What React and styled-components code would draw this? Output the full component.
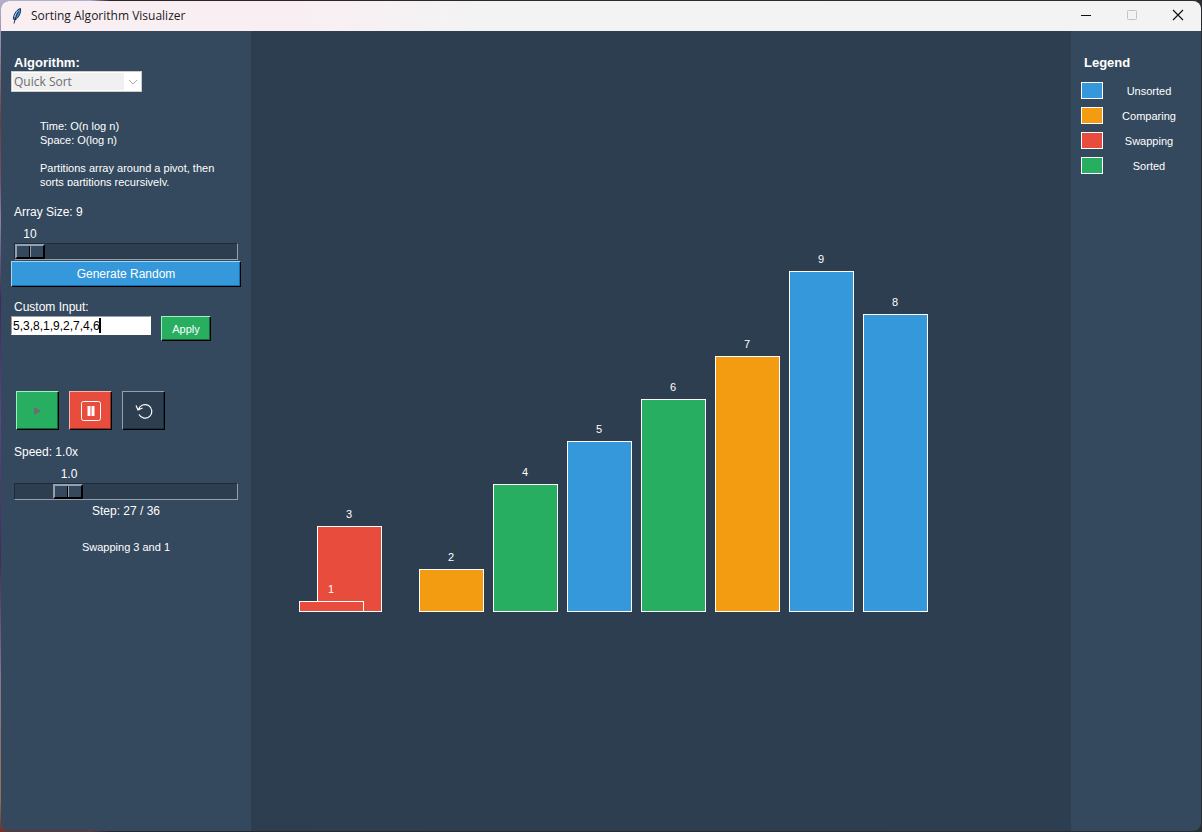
import React, { useState } from "react";
import styled, { createGlobalStyle } from "styled-components";

const GlobalStyle = createGlobalStyle`
  *, *::before, *::after { box-sizing: border-box; }
  html, body, #root { height: 100%; }
  body {
    margin: 0;
    font-family: "Liberation Sans", Arial, sans-serif;
    font-size: 12px;
    line-height: 16px;
    color: #fff;
    background: linear-gradient(180deg, #b3aed0 0, #94849c 50px, #6b3f40 120px, #77506a 180px, #8d83a2 220px, #44275a 300px, #5c4488 420px, #47295c 560px, #8a7890 680px, #97704f 800px, #6f2f2a 100%);
  }
`;

const Frame = styled.div`
  min-height: 100%;
  padding: 1px;
  display: flex;
  background: linear-gradient(90deg, transparent 0, transparent 90px, #2b252d 110px, #2b2d31 100%);
`;

const Window = styled.div`
  flex: 1;
  display: flex;
  flex-direction: column;
  border-radius: 8px;
  overflow: hidden;
  background: #34495e;
`;

const TitleBar = styled.header`
  height: 30px;
  display: flex;
  align-items: center;
  padding: 0 11px 0 10px;
  background: linear-gradient(90deg, #f9eff3 0, #f9eff3 300px, #f3f3f3 480px);
  color: #1b1b1b;
`;

const Title = styled.h1`
  flex: 1;
  margin: 0 0 0 8px;
  font: 400 12px/16px "Open Sans", sans-serif;
`;

const Caption = styled.div`
  display: flex;
  gap: 22px;
`;

const CaptionButton = styled.button`
  width: 24px;
  height: 24px;
  padding: 0;
  border: 0;
  background: none;
  color: ${(p) => (p.disabled ? "#c3c3c3" : "#111")};
  svg { display: block; }
`;

const Body = styled.div`
  flex: 1;
  display: flex;
`;

const Sidebar = styled.aside`
  width: 250px;
  flex: none;
  padding: 24px 10px;
  display: flex;
  flex-direction: column;
`;

const Stage = styled.main`
  flex: 1;
  min-width: 0;
  padding: 0 20px;
  background: #2c3e50;
`;

const Chart = styled.svg`
  display: block;
  overflow: visible;
  text { fill: #fff; font-size: 11px; text-anchor: middle; }
  rect { stroke: #fff; }
`;

const Heading = styled.label`
  padding: 0 3px;
  font-size: 13px;
  font-weight: 700;
`;

const FieldLabel = styled.label`
  padding: 0 3px;
`;

const SelectBox = styled.div`
  position: relative;
  width: 131px;
  height: 21px;
  border: 1px solid #ccc;
  background: #fff;
  padding: 1px;
  svg { position: absolute; right: 3px; top: 5px; pointer-events: none; }
`;

const Select = styled.select`
  display: block;
  width: 111px;
  height: 17px;
  padding: 0 1px;
  border: 0;
  appearance: none;
  background: #f0f0f0;
  color: #6d6d6d;
  opacity: 1;
  font: 12px/17px "Open Sans", sans-serif;
`;

const Info = styled.div`
  height: 67px;
  margin: 27px 0 18px;
  padding: 0 0 0 29px;
  overflow: hidden;
  font-size: 11px;
  line-height: 14px;
  white-space: pre;
`;

const Scale = styled.div`
  display: flex;
  flex-direction: column;
  padding: 0 3px;
  margin-top: 6px;
`;

const ScaleValue = styled.output`
  width: 32px;
  margin-left: ${(p) => p.$at}px;
  text-align: center;
`;

const Range = styled.input`
  appearance: none;
  display: block;
  width: 100%;
  height: 17px;
  margin: 1px 0;
  padding: 0;
  border: 1px solid;
  border-color: #1e2b38 #95a0aa #95a0aa #1e2b38;
  background: #2c3e50;
  &::-webkit-slider-thumb {
    appearance: none;
    width: 30px;
    height: 15px;
    border: 2px solid;
    border-color: #95a0aa #000 #000 #95a0aa;
    background: linear-gradient(90deg, transparent 12px, #000 12px, #000 13px, #95a0aa 13px, #95a0aa 14px, transparent 14px) #34495e;
  }
`;

const Button = styled.button`
  display: flex;
  align-items: center;
  justify-content: center;
  width: ${(p) => p.$w || "auto"};
  height: ${(p) => p.$h};
  padding: 0;
  border: 1px solid;
  border-color: ${(p) => p.$edge} #000 #000 ${(p) => p.$edge};
  box-shadow: inset -1px -1px ${(p) => p.$shade};
  background: ${(p) => p.$fill};
  color: #fff;
  font: ${(p) => p.$size || "12px"}/16px "Liberation Sans", Arial, sans-serif;
`;

const CustomInput = styled.section`
  display: flex;
  flex-direction: column;
  margin-top: 12px;
`;

const InputRow = styled.div`
  display: flex;
  align-items: flex-start;
  gap: 10px;
  padding-top: 1px;
`;

const Entry = styled.div`
  position: relative;
  display: flex;
`;

const Caret = styled.span`
  position: absolute;
  left: 88px;
  top: 2px;
  width: 2px;
  height: 15px;
  background: #000;
`;

const TextInput = styled.input`
  width: 140px;
  height: 19px;
  padding: 0 1px;
  border: 1px solid;
  border-color: #a0a0a0 #fff #fff #a0a0a0;
  border-radius: 0;
  background: #fff;
  color: #000;
  font: 12px/16px "Liberation Sans", Arial, sans-serif;
`;

const Transport = styled.div`
  display: flex;
  gap: 10px;
  margin: 50px 0 14px;
  padding: 0 5px;
`;

const Status = styled.p`
  margin: ${(p) => (p.$small ? "20px" : "2px")} 0 0;
  text-align: center;
  font-size: ${(p) => (p.$small ? "11px" : "12px")};
`;

const LegendPanel = styled.aside`
  width: 130px;
  flex: none;
  padding: 24px 10px;
`;

const LegendTitle = styled.h2`
  margin: 0 0 11px;
  padding: 0 3px;
  font-size: 13px;
  line-height: 16px;
`;

const LegendList = styled.ul`
  margin: 0;
  padding: 0;
  list-style: none;
  display: grid;
  gap: 8px;
`;

const LegendItem = styled.li`
  display: flex;
  align-items: center;
  height: 17px;
  font-size: 11px;
  text-align: center;
  span { flex: 1; padding-left: 4px; }
`;

const Swatch = styled.i`
  width: 22px;
  height: 17px;
  border: 1px solid #fff;
  background: ${(p) => p.$fill};
`;

const COLORS = {
  unsorted: "#3498db",
  comparing: "#f39c12",
  swapping: "#e74c3c",
  sorted: "#27ae60",
};

const BARS = [
  { value: 3, state: "swapping", x: 46, h: 85 },
  { value: 1, state: "swapping", x: 28, h: 10 },
  { value: 2, state: "comparing", x: 148, h: 42 },
  { value: 4, state: "sorted", x: 222, h: 127 },
  { value: 5, state: "unsorted", x: 296, h: 170 },
  { value: 6, state: "sorted", x: 370, h: 212 },
  { value: 7, state: "comparing", x: 444, h: 255 },
  { value: 9, state: "unsorted", x: 518, h: 340 },
  { value: 8, state: "unsorted", x: 592, h: 297 },
];

const BASELINE = 580;

const LEGEND = [
  ["Unsorted", COLORS.unsorted],
  ["Comparing", COLORS.comparing],
  ["Swapping", COLORS.swapping],
  ["Sorted", COLORS.sorted],
];

function Feather() {
  return (
    <svg width="12" height="18" viewBox="0 0 12 18" aria-hidden="true">
      <path d="M9.500 1.500C6 2.500 3 6 2.300 12l1.700 1C7.500 11 10.200 6 9.500 1.500z" fill="#4a90e2" stroke="#15202e" strokeWidth="0.900" />
      <path d="M7.500 4.500C5.500 8 4 12 3 16.500" fill="none" stroke="#15202e" strokeWidth="0.900" />
      <path d="M7 3.800C5.200 5.500 4.200 7.500 3.700 10" fill="none" stroke="#a9d4ff" strokeWidth="0.900" />
    </svg>
  );
}

function BarChart() {
  return (
    <Chart width="660" height="620" role="img" aria-label="Array values">
      {BARS.map((b) => (
        <g key={b.value}>
          <rect x={b.x + 0.5} y={BASELINE - b.h + 0.5} width="64" height={b.h} fill={COLORS[b.state]} />
          <text x={b.x + 32} y={BASELINE - b.h - 8}>{b.value}</text>
        </g>
      ))}
    </Chart>
  );
}

export default function App() {
  const [size, setSize] = useState(10);
  const [speed, setSpeed] = useState(1);
  const [custom, setCustom] = useState("5,3,8,1,9,2,7,4,6");

  return (
    <>
      <GlobalStyle />
      <Frame>
        <Window>
          <TitleBar>
            <Feather />
            <Title>Sorting Algorithm Visualizer</Title>
            <Caption>
              <CaptionButton aria-label="Minimize">
                <svg width="24" height="24"><path d="M7 11.500h10" stroke="currentColor" /></svg>
              </CaptionButton>
              <CaptionButton aria-label="Maximize" disabled>
                <svg width="24" height="24"><rect x="7.500" y="6.500" width="9" height="9" rx="1" fill="none" stroke="currentColor" /></svg>
              </CaptionButton>
              <CaptionButton aria-label="Close">
                <svg width="24" height="24"><path d="M7 6l10 10M17 6L7 16" stroke="currentColor" strokeWidth="1.200" /></svg>
              </CaptionButton>
            </Caption>
          </TitleBar>
          <Body>
            <Sidebar>
              <Heading htmlFor="algorithm">Algorithm:</Heading>
              <SelectBox>
                <Select id="algorithm" disabled>
                  <option>Quick Sort</option>
                </Select>
                <svg width="10" height="10"><path d="M1 3l4 4 4-4" fill="none" stroke="#a5a5a5" /></svg>
              </SelectBox>
              <Info>{"Time: O(n log n)\nSpace: O(log n)\n\nPartitions array around a pivot, then\nsorts partitions recursively."}</Info>
              <FieldLabel htmlFor="size">Array Size: 9</FieldLabel>
              <Scale>
                <ScaleValue htmlFor="size" $at={0}>{size}</ScaleValue>
                <Range id="size" type="range" min="10" max="100" value={size} onChange={(e) => setSize(+e.target.value)} />
              </Scale>
              <Button $h="26px" $fill="#3498db" $edge="#a3d3f5" $shade="#1d6ea6">Generate Random</Button>
              <CustomInput>
                <FieldLabel htmlFor="custom">Custom Input:</FieldLabel>
                <InputRow>
                  <Entry>
                    <TextInput id="custom" value={custom} onChange={(e) => setCustom(e.target.value)} />
                    <Caret />
                  </Entry>
                  <Button $w="50px" $h="25px" $size="11px" $fill="#27ae60" $edge="#9df0bf" $shade="#14663a">Apply</Button>
                </InputRow>
              </CustomInput>
              <Transport>
                <Button $w="43px" $h="39px" $fill="#27ae60" $edge="#9df0bf" $shade="#14663a" aria-label="Play" disabled>
                  <svg width="20" height="20"><path d="M6 6l7 4-7 4z" fill="#6d6d6d" /></svg>
                </Button>
                <Button $w="43px" $h="39px" $fill="#e74c3c" $edge="#f8b5ad" $shade="#8f2d23" aria-label="Pause">
                  <svg width="20" height="20" fill="none" stroke="#fff">
                    <rect x="0.500" y="0.500" width="19" height="19" rx="2" />
                    <path d="M8 5v10M12 5v10" strokeWidth="3" />
                  </svg>
                </Button>
                <Button $w="43px" $h="39px" $fill="#2c3e50" $edge="#95a0aa" $shade="#1e2b38" aria-label="Reset">
                  <svg width="20" height="20" fill="none" stroke="#fff" strokeWidth="1.200">
                    <path d="M4.500 8.500A6.800 6.800 0 1 1 5 13.500M2 4.500l2 4.500 4.500-2" />
                  </svg>
                </Button>
              </Transport>
              <FieldLabel htmlFor="speed">Speed: 1.0x</FieldLabel>
              <Scale>
                <ScaleValue htmlFor="speed" $at={39}>{speed.toFixed(1)}</ScaleValue>
                <Range id="speed" type="range" min="0.25" max="4" step="0.25" value={speed} onChange={(e) => setSpeed(+e.target.value)} />
              </Scale>
              <Status>Step: 27 / 36</Status>
              <Status $small>Swapping 3 and 1</Status>
            </Sidebar>
            <Stage>
              <BarChart />
            </Stage>
            <LegendPanel>
              <LegendTitle>Legend</LegendTitle>
              <LegendList>
                {LEGEND.map(([name, fill]) => (
                  <LegendItem key={name}>
                    <Swatch $fill={fill} />
                    <span>{name}</span>
                  </LegendItem>
                ))}
              </LegendList>
            </LegendPanel>
          </Body>
        </Window>
      </Frame>
    </>
  );
}
